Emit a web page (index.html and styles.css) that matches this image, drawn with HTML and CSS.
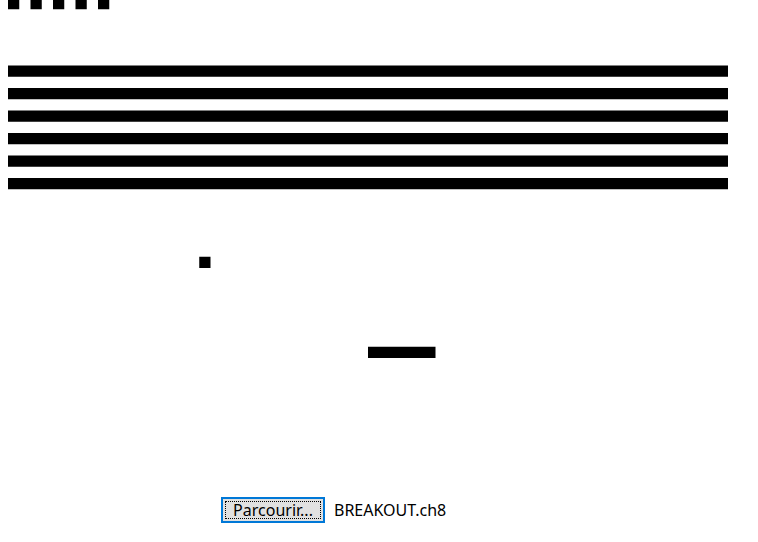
FILE: index.html
```html
<!DOCTYPE html>
<html>
<head>
<meta charset="utf-8">
<title>CHIP-8</title>
<link rel="stylesheet" href="styles.css">
</head>
<body>
<svg class="screen" viewBox="0 0 64 32" width="720" height="360">
  <g fill="#000">
    <rect x="0" y="0" width="1" height="1"/>
    <rect x="2" y="0" width="1" height="1"/>
    <rect x="4" y="0" width="1" height="1"/>
    <rect x="6" y="0" width="1" height="1"/>
    <rect x="8" y="0" width="1" height="1"/>
    <rect x="0" y="6" width="64" height="1"/>
    <rect x="0" y="8" width="64" height="1"/>
    <rect x="0" y="10" width="64" height="1"/>
    <rect x="0" y="12" width="64" height="1"/>
    <rect x="0" y="14" width="64" height="1"/>
    <rect x="0" y="16" width="64" height="1"/>
    <rect x="17" y="23" width="1" height="1"/>
    <rect x="32" y="31" width="6" height="1"/>
  </g>
</svg>
<div class="file-row">
  <span class="browse"><span class="browse-label">Parcourir...</span></span>
  <span class="file-name">BREAKOUT.ch8</span>
</div>
</body>
</html>
```
FILE: styles.css
```css
html, body {
  margin: 0;
  padding: 0;
  background: #fff;
}
body {
  font-family: "Noto Sans", "Open Sans", sans-serif;
}
.screen {
  display: block;
  margin: -2.25px 0 0 8px;
}
.file-row {
  display: flex;
  align-items: center;
  margin: 139px 0 0 221px;
  height: 26px;
}
.browse {
  box-sizing: border-box;
  width: 104px;
  height: 26px;
  border: 2px solid #0078d7;
  background: #e1e1e1;
  padding: 2px;
  display: flex;
}
.browse-label {
  flex: 1;
  border: 1px dotted #000;
  display: flex;
  align-items: center;
  justify-content: center;
  font-size: 16px;
  color: #000;
  line-height: 1;
}
.file-name {
  margin-left: 9px;
  font-size: 16px;
  color: #000;
}
```
